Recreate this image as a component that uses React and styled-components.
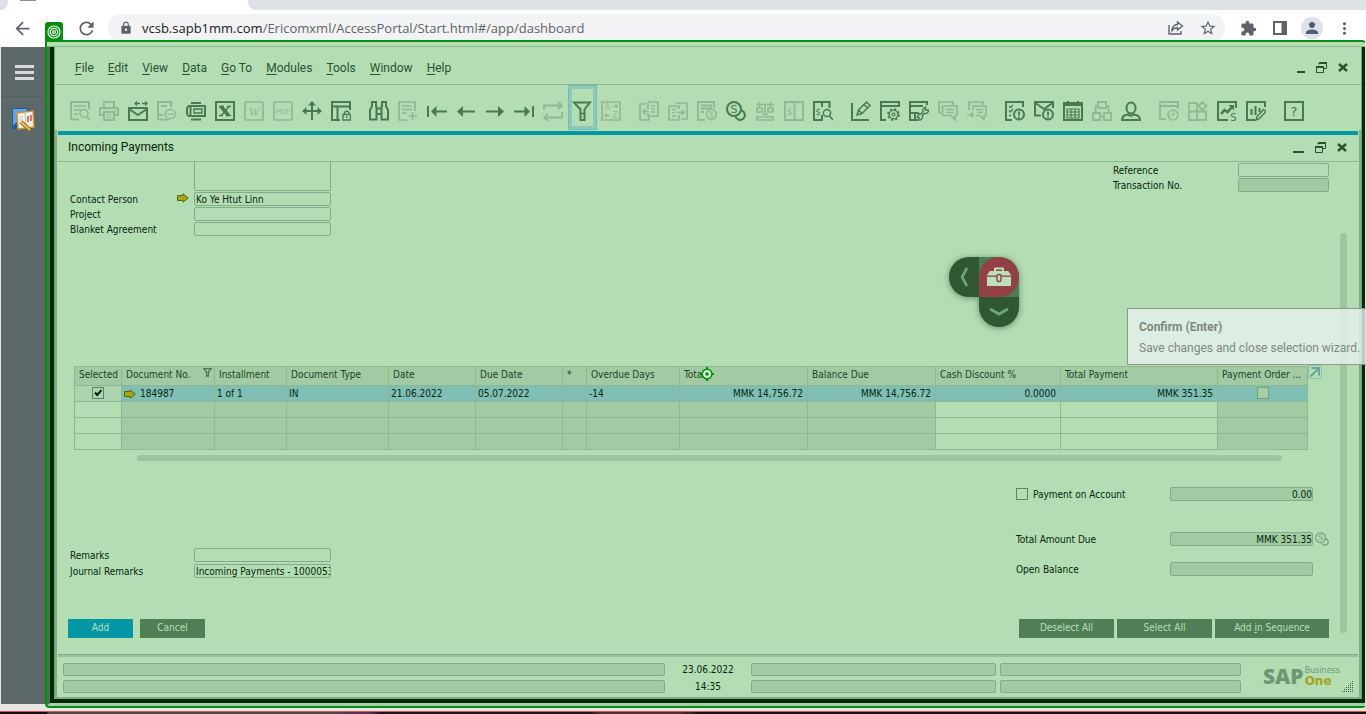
import React from 'react';
import styled, { createGlobalStyle, css } from 'styled-components';
import {
  MdArrowBack,
  MdRefresh,
  MdLock,
  MdStarBorder,
  MdExtension,
  MdPerson,
  MdMoreVert,
} from 'react-icons/md';

const c = {
  bg: '#b4ddb4',
  shade: '#a2cba3',
  line: '#8fb892',
  fieldLine: '#83ac88',
  edge: '#82aa86',
  dark: '#002b04',
  text: '#06260a',
  menu: '#285230',
  icon: '#4a7a50',
  faint: '#8fb992',
  teal: '#0397a6',
  row: '#80bfb4',
  button: '#527e55',
  record: '#078d12',
  thumb: '#9dc69f',
};
const small = "'DejaVu Sans Condensed', 'DejaVu Sans', sans-serif";
const ui = "Roboto, 'Open Sans', sans-serif";

const GlobalStyle = createGlobalStyle`
  *, *::before, *::after { box-sizing: border-box; }
  body { margin: 0; background: #fff; overflow: hidden; }
  button, input, textarea { font: inherit; color: inherit; margin: 0; }
  button { padding: 0; border: 0; background: none; }
  svg { display: block; flex: none; }
`;

const Page = styled.div`
  display: flex;
  flex-direction: column;
  min-height: 100vh;
  font: 10px/14px ${small};
  color: ${c.text};
`;

/* ---------- browser chrome ---------- */
const TabStrip = styled.div`
  display: flex;
  justify-content: space-between;
  flex: none;
  height: 10px;
  background: #fff;
`;
const TabEdge = styled.div`
  width: 8px;
  background: #dee1e6;
  border-radius: 0 0 8px 0;
`;
const Tab = styled.div`
  width: 240px;
  padding-left: 12px;
  &::before {
    content: '';
    display: block;
    width: 16px;
    height: 1px;
    background: #8c8c8c;
  }
`;
const TabRest = styled.div`
  flex: 1;
  background: #dee1e6;
  border-radius: 0 0 0 8px;
`;
const BrowserBar = styled.div`
  display: flex;
  align-items: flex-start;
  flex: none;
  height: 30px;
  padding: 4px 12px 0 12px;
  overflow: hidden;
  color: #5f6368;
`;
const ChromeButton = styled.button`
  display: flex;
  align-items: center;
  justify-content: center;
  flex: none;
  width: ${(p) => p.$w || 20}px;
  height: 28px;
  margin-left: ${(p) => p.$gap || 0}px;
`;
const Address = styled.div`
  display: flex;
  align-items: center;
  flex: 1;
  height: 28px;
  margin-left: 12px;
  padding: 0 8px 0 11px;
  border-radius: 14px;
  background: #f1f3f4;
`;
const Url = styled.div`
  flex: 1;
  margin-left: 9px;
  font: 13px/20px 'Open Sans', sans-serif;
  white-space: nowrap;
  b { font-weight: 400; color: #202124; }
`;
const Avatar = styled.span`
  display: flex;
  align-items: center;
  justify-content: center;
  width: 22px;
  height: 22px;
  border-radius: 50%;
  background: #dee1e6;
  color: #4d5b76;
`;

/* ---------- workspace ---------- */
const Workspace = styled.div`
  display: flex;
  flex: 1;
`;
const SideColumn = styled.div`
  display: flex;
  flex: none;
  width: 45px;
  padding: 7px 0 4px 1px;
  background: linear-gradient(#fff 7px, #e6e6e6 7px);
`;
const Sidebar = styled.nav`
  flex: 1;
  background: #5c686a;
`;
const SideItem = styled.button`
  display: flex;
  align-items: center;
  justify-content: center;
  width: 100%;
  height: ${(p) => p.$h}px;
  padding-top: ${(p) => (p.$ruled ? 2 : 0)}px;
  border-bottom: ${(p) => (p.$ruled ? '1px solid #556062' : '0')};
`;
const Burger = styled.span`
  width: 19px;
  height: 15px;
  margin-left: 3px;
  border-top: 3px solid #d6dadb;
  border-bottom: 3px solid #d6dadb;
  &::before {
    content: '';
    display: block;
    height: 3px;
    margin-top: 3px;
    background: #d6dadb;
  }
`;
const Frame = styled.div`
  position: relative;
  display: flex;
  flex-direction: column;
  flex: 1;
  min-width: 0;
  border: 2px solid ${c.record};
  border-right: 1px solid #d7ead8;
  border-radius: 0 4px 4px 4px;
  background: ${c.bg};
`;
const RecordBadge = styled.div`
  position: absolute;
  left: -2px;
  top: -20px;
  display: flex;
  align-items: center;
  justify-content: center;
  width: 18px;
  height: 19px;
  border-radius: 3px 3px 0 0;
  background: ${c.record};
`;
const Strip = styled.div`
  flex: none;
  height: 5px;
  border-bottom: 1px solid ${c.line};
`;
const Shell = styled.div`
  display: flex;
  flex: 1;
  border-left: 3px solid #45744b;
  border-bottom: 3px solid #a9cfa9;
`;
const Desk = styled.div`
  display: flex;
  flex: 1;
  min-width: 0;
  border: solid ${c.dark};
  border-width: 0 3px 4px 4px;
`;
const AppWindow = styled.div`
  display: flex;
  flex-direction: column;
  flex: 1;
  min-width: 0;
  border: solid #7aa280;
  border-width: 0 1px;
`;

/* ---------- menu and tool bars ---------- */
const MenuBar = styled.div`
  display: flex;
  justify-content: space-between;
  align-items: center;
  height: 38px;
  padding: 4px 13px 0 20px;
  border-bottom: 1px solid ${c.line};
`;
const Menus = styled.nav`
  display: flex;
  gap: 14px;
`;
const MenuButton = styled.button`
  font: 12px/18px ${ui};
  color: ${c.menu};
  white-space: nowrap;
  u { text-underline-offset: 2px; }
`;
const WindowControls = styled.div`
  display: flex;
  align-items: center;
  gap: ${(p) => p.$gap}px;
  color: ${c.menu};
`;
const ToolBar = styled.div`
  display: flex;
  gap: 9px;
  height: 45px;
  padding-left: 11px;
`;
const ToolGroup = styled.div`
  display: flex;
`;
const ToolButton = styled.button`
  width: 29px;
  height: 45px;
  padding: 16px 5px 9px 4px;
  color: ${(p) => (p.$on ? c.icon : c.faint)};
  ${(p) =>
    p.$active &&
    css`
      box-shadow: inset 0 0 0 1px #70bdb6, inset 0 0 0 4px #90c8b8;
    `}
`;

/* ---------- child window ---------- */
const Child = styled.section`
  display: flex;
  flex-direction: column;
  flex: 1;
  padding: 1px 1px 0;
  border: solid ${c.edge};
  border-width: 0 2px 2px;
`;
const TitleBar = styled.header`
  display: flex;
  align-items: center;
  justify-content: space-between;
  flex: none;
  height: 31px;
  padding: 0 11px 2px 10px;
  border-top: 4px solid ${c.teal};
  border-bottom: 1px solid ${c.line};
`;
const Title = styled.h1`
  margin: 0;
  font: 12px/18px ${ui};
`;
const Form = styled.form`
  display: flex;
  flex: 1;
`;
const FormBody = styled.div`
  display: flex;
  flex-direction: column;
  flex: 1;
  min-width: 0;
`;
const VerticalThumb = styled.div`
  flex: none;
  width: 7px;
  margin: 71px 11px 21px;
  border-radius: 4px;
  background: ${c.thumb};
`;
const HeaderPart = styled.div`
  display: flex;
  justify-content: space-between;
  flex: 1 0 204px;
  padding-left: 12px;
`;
const Fields = styled.div`
  display: flex;
  flex-direction: column;
  gap: ${(p) => p.$gap || 1}px;
  padding-top: ${(p) => p.$top || 0}px;
`;
const FieldRow = styled.div`
  display: flex;
  height: 14px;
  margin-top: ${(p) => p.$space || 0}px;
`;
const Label = styled.label`
  display: flex;
  align-items: flex-start;
  justify-content: space-between;
  flex: none;
  width: ${(p) => p.$w}px;
  padding: 1px 5px 0 0;
  white-space: nowrap;
`;
const Field = styled.input`
  flex: none;
  width: ${(p) => p.$w}px;
  height: 14px;
  padding: 1px 0 0 ${(p) => (p.$right ? 0 : 1)}px;
  border: 1px solid ${c.fieldLine};
  border-radius: 2px;
  outline: 0;
  background: ${(p) => (p.readOnly ? c.shade : 'transparent')};
  text-align: ${(p) => (p.$right ? 'right' : 'left')};
`;
const PayTo = styled.textarea`
  display: block;
  width: 137px;
  height: 29px;
  margin-left: 124px;
  border: solid ${c.fieldLine};
  border-width: 0 1px 1px;
  border-radius: 0 0 2px 2px;
  background: transparent;
  resize: none;
`;
const TablePart = styled.div`
  display: flex;
  align-items: flex-start;
  padding-left: 16px;
`;
const Table = styled.table`
  flex: 1;
  width: 0;
  table-layout: fixed;
  border-collapse: separate;
  border-spacing: 0;
  border: solid ${c.line};
  border-width: 1px 0 0 1px;
`;
const Th = styled.th`
  height: 19px;
  padding: 0 2px 2px 4px;
  border: solid ${c.line};
  border-width: 0 1px 1px 0;
  background: ${c.shade};
  color: #1d4424;
  font-weight: 400;
  line-height: 14px;
  text-align: left;
  white-space: nowrap;
  overflow: hidden;
`;
const HeadCell = styled.span`
  display: flex;
  justify-content: space-between;
  align-items: flex-start;
`;
const Td = styled.td`
  height: 16px;
  padding: 0 ${(p) => (p.$right ? 4 : 2)}px;
  border: solid ${c.line};
  border-width: 0 1px 1px 0;
  background: ${(p) => p.$bg};
  line-height: 14px;
  white-space: nowrap;
  overflow: hidden;
  text-align: ${(p) => (p.$right ? 'right' : p.$center ? 'center' : 'left')};
`;
const Linked = styled.span`
  display: flex;
  align-items: center;
  gap: 4px;
`;
const Check = styled.input`
  appearance: none;
  display: ${(p) => (p.$inline ? 'block' : 'inline-block')};
  flex: none;
  width: 12px;
  height: 12px;
  border: 1px solid ${(p) => (p.disabled ? '#7c9f75' : '#5a875f')};
  vertical-align: top;
  margin: ${(p) => (p.$inline ? 1 : 0)}px 0 0;
  background: ${(p) => (p.disabled ? '#a4cda8' : 'transparent')};
  &:checked {
    background: url("data:image/svg+xml,%3Csvg xmlns='http://www.w3.org/2000/svg' viewBox='0 0 10 10'%3E%3Cpath d='M2 4.5 4.2 7 8.5 2.2' fill='none' stroke='%23001c04' stroke-width='2'/%3E%3C/svg%3E");
  }
`;
const PopOut = styled.button`
  flex: none;
  width: 14px;
  height: 14px;
  margin: -1px 7px 0 0;
  border: 1px solid #8fc4b4;
  color: #66a59a;
`;
const HorizontalThumb = styled.div`
  flex: none;
  height: 6px;
  margin: 5px 47px 0 79px;
  border-radius: 3px;
  background: ${c.thumb};
`;
const LowerPart = styled.div`
  display: flex;
  justify-content: space-between;
  flex: none;
  height: 158px;
  padding-left: 12px;
`;
const Ticked = styled.label`
  display: flex;
  gap: 5px;
  width: 154px;
  white-space: nowrap;
  span { padding-top: 1px; }
`;
const Tail = styled.span`
  width: 16px;
  padding-left: 2px;
  color: #6f9f76;
`;
const ButtonRow = styled.div`
  display: flex;
  justify-content: space-between;
  padding: 0 0 16px 10px;
`;
const Buttons = styled.div`
  display: flex;
  gap: ${(p) => p.$gap}px;
`;
const Button = styled.button`
  width: ${(p) => p.$w}px;
  height: 19px;
  padding-bottom: 1px;
  background: ${(p) => (p.$primary ? c.teal : c.button)};
  color: #b4e0b6;
`;
const StatusBar = styled.footer`
  display: grid;
  grid-template-columns: 602fr 78px 245fr 241fr 109px;
  grid-template-rows: 13px 13px;
  gap: 4px;
  flex: none;
  padding: 8px 4px 4px 5px;
  border-top: 1px solid ${c.fieldLine};
  box-shadow: inset 0 2px 0 #9ac39c;
`;
const StatusField = styled.input`
  min-width: 0;
  width: 100%;
  height: 13px;
  padding: 0 2px;
  border: 1px solid ${c.fieldLine};
  border-radius: 2px;
  background: ${c.shade};
`;
const StatusText = styled.div`
  text-align: center;
  line-height: 13px;
`;
const Logo = styled.div`
  display: flex;
  grid-column: 5;
  grid-row: 1 / 3;
  padding-left: 18px;
  color: #6f9872;
`;
const LogoMark = styled.strong`
  font: 800 21px/26px 'Open Sans', sans-serif;
`;
const LogoWords = styled.span`
  display: flex;
  flex-direction: column;
  padding: 4px 0 0 1px;
  font: 8px/8px 'DejaVu Sans', sans-serif;
  strong { font: 700 12px/12px 'DejaVu Sans', sans-serif; color: #a8a022; }
`;
const Grip = styled.svg`
  align-self: flex-end;
  margin-left: auto;
`;

/* ---------- things lying over the form ---------- */
const ToolboxWidget = styled.div`
  position: absolute;
  left: 902px;
  top: 215px;
  display: grid;
  grid-template-columns: 30px 40px;
  grid-template-rows: 40px 30px;
  filter: drop-shadow(0 1px 3px rgba(20, 60, 20, 0.5));
`;
const WidgetButton = styled.button`
  display: flex;
  align-items: center;
  justify-content: center;
  grid-column: ${(p) => p.$col};
  grid-row: ${(p) => p.$row};
  background: #305830;
  border-radius: ${(p) => p.$radius};
  color: #72a377;
`;
const WidgetCore = styled.div`
  display: flex;
  background: #4f7c52;
  border-radius: 0 20px 0 0;
  button { flex: 1; background: #914043; color: #bce0b8; }
`;
const Tooltip = styled.div`
  position: absolute;
  right: -1px;
  top: 266px;
  width: 239px;
  height: 57px;
  padding: 8px 11px;
  border: 1px solid #8b9a8c;
  border-right: 0;
  background: rgba(233, 241, 240, 0.8);
  color: #7c897e;
  font: 12px/21px ${ui};
  white-space: nowrap;
  strong { display: block; font-weight: 700; }
`;
const Marker = styled.svg`
  position: absolute;
  left: 653px;
  top: 325px;
`;
const BottomEdge = styled.div`
  flex: none;
  height: 6px;
  border-top: 3px solid #e6e6e6;
  background: linear-gradient(#d9534f 1px, transparent 1px),
    linear-gradient(90deg, #111 47px, #4b4a47 48px 340px, #55305a 350px 370px, #151a22 380px 590px, #503033 600px 680px, #10151d 700px);
`;

/* ---------- drawings ---------- */
const Svg = ({ size = 20, w, h, box, sw = 2, children, ...rest }) => (
  <svg
    width={w || size}
    height={h || size}
    viewBox={box || `0 0 ${w || size} ${h || size}`}
    fill="none"
    stroke="currentColor"
    strokeWidth={sw}
    aria-hidden="true"
    {...rest}
  >
    {children}
  </svg>
);
const Glyph = ({ x, y, size, children, serif, italic }) => (
  <text
    x={x}
    y={y}
    fontSize={size}
    textAnchor="middle"
    fill="currentColor"
    stroke="none"
    fontStyle={italic ? 'italic' : 'normal'}
    fontFamily={serif ? "'Liberation Serif', serif" : "'DejaVu Sans', sans-serif"}
  >
    {children}
  </text>
);

const art = {
  preview: (
    <>
      <path d="M9 18.5H3Q1 18.5 1 17V1h18v7" />
      <path d="M4 5h12M4 9h8M4 13h4" strokeWidth="1.4" />
      <circle cx="14" cy="12.5" r="4" strokeWidth="1.4" />
      <path d="m16.500 15.500 3 3.500" strokeWidth="1.6" />
    </>
  ),
  print: (
    <>
      <path d="M5 6V1h10v5M5 14H1V7h18v7h-4" />
      <path d="M5 11h10v8H5z" />
      <path d="M7 13.500h5M7 16h5M15 9.500h2" strokeWidth="1" />
    </>
  ),
  mail: (
    <>
      <path d="M1 7h18v12H1z" />
      <path d="m2 8.500 8 5.500 8-5.500" />
      <path d="M6.500 2.500H12M9 .5 7 2.500l2 2M19.500 2.500H14M17 .5l2 2-2 2" strokeWidth="1.3" />
    </>
  ),
  docChat: (
    <>
      <path d="M7 18.500H2Q1 18.500 1 17V1h13v5M4 5h6M1 14h5" />
      <path d="M13.500 8.500c7 0 7 9 0 9l-5 1.500 1-3c-3-3-1-7.500 4-7.500z" strokeWidth="1.4" />
      <path d="M10.500 13h1.500M13 13h1.500M15.500 13H17" strokeWidth="1.8" />
    </>
  ),
  fax: (
    <>
      <path d="M4.500 5h14.500v10H4.500zM4.500 5H2.500L1 7v6l1.500 2h2" />
      <path d="M5 2h10M5 18.500h10" />
      <path d="M8 8h8v4H8z" strokeWidth="1.4" />
    </>
  ),
  excel: (
    <>
      <path d="M1 1h18v18H1z" />
      <path d="m6 5.500 7.500 9" strokeWidth="3.6" />
      <path d="M14.500 5 6 15M4 5.500h5M11 14.500h5M12 5.500h4M4 14.500h4" strokeWidth="1.3" />
    </>
  ),
  word: (
    <>
      <rect x="1" y="1" width="18" height="18" rx="1" strokeWidth="1.7" />
      <Glyph x="10" y="14.500" size="13" serif italic>W</Glyph>
    </>
  ),
  pdf: (
    <>
      <rect x="1" y="1" width="18" height="18" rx="1" strokeWidth="1.7" />
      <Glyph x="10" y="12.500" size="7">PDF</Glyph>
    </>
  ),
  move: (
    <>
      <path d="M10 2v17M2 10h16" />
      <path d="M10 0 6 4.500h8zM0 10l4.500-4v8zM20 10l-4.500-4v8z" fill="currentColor" stroke="none" />
    </>
  ),
  layoutLock: (
    <>
      <path d="M9 19H1V1h18v8M1 5.500h18M6.500 5.500V19" />
      <path d="M12 13.500h7.500v5.500H12zM13.500 13.500v-2q2.200-2.500 4.500 0v2M15.700 15v2" strokeWidth="1.4" />
    </>
  ),
  binoculars: (
    <path d="M3 6V1h4v5M13 6V1h4v5M3 5 1 9v9.500h6.500V5M17 5l2 4v9.500h-6.500V5M7.500 7.500h5M7.500 13h5" />
  ),
  docPlus: (
    <>
      <path d="M9 19H1V1h16v9" strokeWidth="1.700" />
      <path d="M4 5h10M4 8.500h10M4 12h5M14.500 11v8M10.500 15h8.500" strokeWidth="1.600" />
    </>
  ),
  first: (
    <>
      <path d="M1 5v11M6 10.500h14" />
      <path d="m4 10.500 5.500-5.500v11z" fill="currentColor" stroke="none" />
    </>
  ),
  prev: (
    <>
      <path d="M3 10.500h16" />
      <path d="M1 10.500 7 5v11z" fill="currentColor" stroke="none" />
    </>
  ),
  next: (
    <>
      <path d="M1 10.500h16" />
      <path d="M19 10.500 13 5v11z" fill="currentColor" stroke="none" />
    </>
  ),
  last: (
    <>
      <path d="M19 5v11M0 10.500h14" />
      <path d="m16 10.500-5.500-5.500v11z" fill="currentColor" stroke="none" />
    </>
  ),
  loop: (
    <path d="M1 9V4.500h17M15 1l4 3.500L15 8M19 11v5.500H2M5 13l-4 3.500L5 20" strokeWidth="1.8" />
  ),
  filter: (
    <>
      <path d="M2 1.500h16L12.500 8.500V19h-4V8.500z" />
      <path d="M8.500 12.500h4" strokeWidth="1.5" />
    </>
  ),
  sort: (
    <>
      <path d="M1 1h18v18H1z" strokeWidth="1.7" />
      <Glyph x="6.500" y="9" size="8">A</Glyph>
      <Glyph x="14" y="17" size="8">Z</Glyph>
      <path d="M11.500 5h5M14.500 3l2 2-2 2M9 14.500H4M6 12.500l-2 2 2 2" strokeWidth="1.2" />
    </>
  ),
  copyFrom: (
    <>
      <path d="M7 3H1v16h9v-3M9 1h10v14H9v-3M9 8V1M12 5h4M12 8h4M12 11h4" strokeWidth="1.7" />
      <path d="M10 10.500H4M6.500 8 4 10.500 6.500 13" strokeWidth="1.7" />
    </>
  ),
  copyTo: (
    <>
      <path d="M8 2h11v16h-6M11 14v5H1V5h10v3M4 8.500h4M4 11.500h3M4 15h4" strokeWidth="1.7" />
      <path d="M9 11.500h7M13.500 9l2.500 2.500-2.500 2.500" strokeWidth="1.7" />
    </>
  ),
  docCoin: (
    <>
      <path d="M8 19H1V1h16v6M4 4.500h10v3H4M4 11h3" strokeWidth="1.8" />
      <circle cx="14.5" cy="13.5" r="5" strokeWidth="1.5" />
      <Glyph x="14.500" y="17" size="9">$</Glyph>
    </>
  ),
  coins: (
    <>
      <circle cx="8" cy="8" r="7" />
      <path d="M15.500 9.500a4.800 4.800 0 1 1-6 6" />
      <Glyph x="8" y="12" size="11">S</Glyph>
    </>
  ),
  scales: (
    <>
      <path d="M1 3.500h18M10 3.500V14M2 11h5V7H2zM13 11h5V7h-5zM4.500 1v6M15.500 1v6" strokeWidth="1.700" />
      <path d="M2 16h16v3H2zM7 13.500h6" strokeWidth="1.700" />
    </>
  ),
  ledger: (
    <>
      <path d="M1 1h18v18H1zM10.500 1v18" strokeWidth="1.8" />
      <Glyph x="5.700" y="13.500" size="9">$</Glyph>
    </>
  ),
  ledgerSearch: (
    <>
      <path d="M10 19H1V1h15.500v6M9 1v5M9 14v5" />
      <Glyph x="5" y="13.500" size="9">$</Glyph>
      <circle cx="14" cy="12" r="3.6" strokeWidth="1.5" />
      <path d="m16.500 15 3.500 4" strokeWidth="1.6" />
    </>
  ),
  edit: (
    <>
      <path d="M1 2v17h17" />
      <path d="m6 14 1.500-5 8-8 3.500 3.500-8 8zM13 3.500l3.500 3.500M7.500 9l3.500 3.500" strokeWidth="1.5" />
    </>
  ),
  windowGear: (
    <>
      <path d="M6 19H1V1h18v5M1 5h18" />
      <circle cx="13.5" cy="13.5" r="5.5" strokeDasharray="2.2 2.12" strokeWidth="1.6" />
      <circle cx="13.5" cy="13.5" r="4.3" strokeWidth="1.3" />
      <circle cx="13.5" cy="13.5" r="1.5" strokeWidth="1.1" />
    </>
  ),
  formWrench: (
    <>
      <path d="M9 19H1V1h17v3M1 5h13M1 12h9M6 12v7" />
      <path d="M16.500 6v3h3v1.500l-2 2h-2.500l-1.500 2V17l-2 2h-1.500v-2.500H8.500V15l2-2H12l2-2.500V8z" strokeWidth="1.4" />
    </>
  ),
  chat: (
    <>
      <path d="M3 12H1V1h14v3" strokeWidth="1.7" />
      <path d="M4.500 5H19v9.500h-2V19l-4-4.500H4.500zM8 8.500h8M8 11.500h8" strokeWidth="1.7" />
    </>
  ),
  chatSend: (
    <>
      <path d="M2 9V1h14v3" strokeWidth="1.7" />
      <path d="M6 9V5h13v9.500h-2V19l-4-4.500H9M9 8.500h7M10 11.500h6M0 14h6M4 11.500 6.500 14 4 16.500" strokeWidth="1.6" />
    </>
  ),
  taskAlert: (
    <>
      <path d="M7 19H1V1h17v5" />
      <path d="m4 5 1.500 1.500L8 4M4 9.500 5.500 11 8 8M4 14.500h2" strokeWidth="1.3" />
      <circle cx="14" cy="13.5" r="5" />
      <path d="M14 10.500v4M14 15.500v1.500" strokeWidth="1.8" />
    </>
  ),
  mailAlert: (
    <>
      <path d="M7 14.500H1V1h18v6M1.500 2l8.500 6 8.500-6" />
      <circle cx="14" cy="13.5" r="5" />
      <path d="M14 10.500v4M14 15.500v1.500" strokeWidth="1.8" />
    </>
  ),
  calendar: (
    <>
      <path d="M1 2h18v17H1z" />
      <path d="M1 3.500h18" strokeWidth="3" />
      <path d="M5 0v4M15 0v4" />
      <path d="M4 8h12v9H4zM8 8v9M12 8v9M4 11h12M4 14h12" strokeWidth="1.2" />
    </>
  ),
  boxes: (
    <path d="M6 1h8v6H6zM1 12h7v7H1zM12 12h7v7h-7zM8 15.500h4M3.500 12V5H6M16.500 12V5H14" strokeWidth="1.8" />
  ),
  person: (
    <>
      <ellipse cx="10" cy="7" rx="4.5" ry="5.5" />
      <path d="M7 13.500c-4 .5-6 2-6 5.500h18c0-3.500-2-5-6-5.500-1.500 1.500-4.500 1.500-6 0z" />
    </>
  ),
  windowGauge: (
    <>
      <path d="M7 18H1V1h18v7M1 5h18" strokeWidth="1.8" />
      <circle cx="14" cy="14" r="5" strokeWidth="1.6" />
      <path d="m13 15 3-3M10.500 14h1.500M14 10.500v1" strokeWidth="1.4" />
    </>
  ),
  widgets: (
    <path d="M1 2h8v17H1zM1 10.500h17V19H9M14.500 1l4 4-4 4-4-4z" strokeWidth="1.8" />
  ),
  trend: (
    <>
      <path d="M11 19H1V1h18v6" />
      <path d="m4 13 3.500-4 3 2 5-5.500" strokeWidth="2.6" />
      <path d="M11.500 4H17v5.500z" fill="currentColor" stroke="none" />
      <Glyph x="16.500" y="19.500" size="10">S</Glyph>
    </>
  ),
  chartEdit: (
    <>
      <path d="M9 19H1V1h18v5" />
      <path d="M5.500 8v6M9.500 5v9M13.500 7v4" />
      <path d="m10 19 1-3.500 6.500-7L20 10.500l-6.500 7z" strokeWidth="1.4" />
    </>
  ),
  help: (
    <>
      <path d="M1 1h18v18H1z" />
      <Glyph x="10" y="14.500" size="13">?</Glyph>
    </>
  ),
};

const toolGroups = [
  ['preview', 'print', '*mail', 'docChat', '*fax', '*excel', 'word', 'pdf', '*move', '*layoutLock'],
  ['*binoculars', 'docPlus', '*first', '*prev', '*next', '*last', 'loop', '*filter', 'sort'],
  ['copyFrom', 'copyTo', 'docCoin', '*coins', 'scales', 'ledger', '*ledgerSearch'],
  ['*edit', '*windowGear', '*formWrench', 'chat', 'chatSend'],
  ['*taskAlert', '*mailAlert', '*calendar', 'boxes', '*person'],
  ['windowGauge', 'widgets', '*trend', '*chartEdit'],
  ['*help'],
];
const menus = ['File', 'Edit', 'View', 'Data', 'Go To', 'Modules', 'Tools', 'Window', 'Help'];

const LinkArrow = () => (
  <svg width="12" height="10" viewBox="0 0 12 10" aria-hidden="true">
    <path d="M.5 2.500H6V.8L11.300 5 6 9.200V7.500H.5z" fill="#aea50c" stroke="#4d6a1c" />
  </svg>
);

const Controls = ({ gap, size }) => (
  <WindowControls $gap={gap}>
    <button type="button" aria-label="Minimize">
      <Svg w={size} h={11}><path d={`M0 10h${size}`} /></Svg>
    </button>
    <button type="button" aria-label="Restore">
      <Svg w={11} h={11} sw={1}>
        <path d="M3 2.500V1h7.500v5.500H8M.5 4.500h7v6h-7z" />
        <path d="M3 1h8M0 5h8" strokeWidth="2" />
      </Svg>
    </button>
    <button type="button" aria-label="Close">
      <Svg w={10} h={11} sw={2.4}><path d="m1 2 8 7M9 2 1 9" /></Svg>
    </button>
  </WindowControls>
);

const columns = [
  { w: 47, title: 'Selected', light: true },
  { w: 93, title: 'Document No.' },
  { w: 72, title: 'Installment', value: '1 of 1' },
  { w: 102, title: 'Document Type', value: 'IN' },
  { w: 87, title: 'Date', value: '21.06.2022' },
  { w: 87, title: 'Due Date', value: '05.07.2022' },
  { w: 24, title: '*' },
  { w: 93, title: 'Overdue Days', value: '-14' },
  { w: 128, title: 'Total', value: 'MMK 14,756.72', right: true },
  { w: 128, title: 'Balance Due', value: 'MMK 14,756.72', right: true },
  { w: 125, title: 'Cash Discount %', value: '0.0000', right: true, light: true },
  { w: 157, title: 'Total Payment', value: 'MMK 351.35', right: true, light: true },
  { w: 90, title: 'Payment Order ...' },
];

function PaymentTable() {
  return (
    <Table>
      <colgroup>
        {columns.map((col) => (
          <col key={col.title} width={col.w} />
        ))}
      </colgroup>
      <thead>
        <tr>
          {columns.map((col, i) => (
            <Th key={col.title} scope="col">
              {i === 1 ? (
                <HeadCell>
                  {col.title}
                  <Svg w={9} h={9} sw={1.3} color={c.icon}>
                    <path d="M.8.700h7.400L5.400 4v4H3.600V4z" />
                  </Svg>
                </HeadCell>
              ) : (
                col.title
              )}
            </Th>
          ))}
        </tr>
      </thead>
      <tbody>
        <tr>
          {columns.map((col, i) => (
            <Td
              key={col.title}
              $bg={i === 0 ? '#abd5ae' : c.row}
              $right={col.right}
              $center={i === 0 || i === 12}
            >
              {i === 0 && <Check type="checkbox" aria-label="Selected" defaultChecked />}
              {i === 1 && (
                <Linked>
                  <LinkArrow />
                  184987
                </Linked>
              )}
              {i === 12 && <Check type="checkbox" aria-label="Payment order" disabled />}
              {col.value}
            </Td>
          ))}
        </tr>
        {[1, 2, 3].map((row) => (
          <tr key={row}>
            {columns.map((col) => (
              <Td key={col.title} $bg={col.light ? c.bg : c.shade} />
            ))}
          </tr>
        ))}
      </tbody>
    </Table>
  );
}

export default function App() {
  return (
    <Page>
      <GlobalStyle />
      <TabStrip>
        <TabEdge />
        <Tab />
        <TabRest />
      </TabStrip>
      <BrowserBar>
        <ChromeButton aria-label="Back"><MdArrowBack size={21} /></ChromeButton>
        <ChromeButton aria-label="Reload" $gap={44}><MdRefresh size={21} /></ChromeButton>
        <Address>
          <MdLock size={14} />
          <Url><b>vcsb.sapb1mm.com</b>/Ericomxml/AccessPortal/Start.html#/app/dashboard</Url>
          <ChromeButton aria-label="Share" $w={16}>
            <Svg w={16} h={14} sw={1.4}>
              <path d="M1 4v9h12v-3M9.500 1l5 4-5 4V6.800c-2.500 0-4 .700-5.500 2.700.300-3.500 2-5.700 5.500-6z" />
            </Svg>
          </ChromeButton>
          <ChromeButton aria-label="Bookmark" $w={18} $gap={15}><MdStarBorder size={18} /></ChromeButton>
        </Address>
        <ChromeButton aria-label="Extensions" $w={18} $gap={14}><MdExtension size={17} /></ChromeButton>
        <ChromeButton aria-label="Side panel" $w={14} $gap={16}>
          <Svg size={14}>
            <path d="M1 1h12v12H1z" />
            <path d="M11 1v12" strokeWidth="5" />
          </Svg>
        </ChromeButton>
        <ChromeButton aria-label="Profile" $w={22} $gap={14}><Avatar><MdPerson size={18} /></Avatar></ChromeButton>
        <ChromeButton aria-label="Menu" $gap={11}><MdMoreVert size={19} /></ChromeButton>
      </BrowserBar>

      <Workspace>
        <SideColumn>
          <Sidebar>
            <SideItem aria-label="Open menu" $h={50} $ruled><Burger /></SideItem>
            <SideItem aria-label="SAP Business One" $h={44}>
              <svg width="24" height="27" viewBox="0 0 24 27">
                <path d="M1 2h17v4L7 23H1z" fill="#205c9c" />
                <path d="M2 3h15L2 20z" fill="#6aa3d5" />
                <path d="m6 7 16-2 1 16-16 2z" fill="#f7f3ea" stroke="#c9963d" strokeWidth="1.5" />
                <path d="m14 6 1 16M8 11h4M8 14h4M8 17h4" stroke="#bbb" />
                <path d="M17 10v6M20 9v6" stroke="#d04a3a" strokeWidth="1.5" />
                <path d="m10 16 9 8" stroke="#8a6a1d" strokeWidth="4" />
                <path d="m10 16 9 8" stroke="#f0c453" strokeWidth="2" />
              </svg>
            </SideItem>
          </Sidebar>
        </SideColumn>

        <Frame>
          <RecordBadge>
            <Svg size={14} sw={1.2} color="#e6f6e6">
              <circle cx="7" cy="7" r="6" />
              <circle cx="7" cy="7" r="3.7" />
              <circle cx="7" cy="7" r="1.4" />
            </Svg>
          </RecordBadge>
          <Strip />
          <Shell>
            <Desk>
              <AppWindow>
                <MenuBar>
                  <Menus>
                    {menus.map((m) => (
                      <MenuButton key={m} type="button"><u>{m[0]}</u>{m.slice(1)}</MenuButton>
                    ))}
                  </Menus>
                  <Controls gap={11} size={8} />
                </MenuBar>
                <ToolBar>
                  {toolGroups.map((group) => (
                    <ToolGroup key={group[0]}>
                      {group.map((entry) => {
                        const on = entry[0] === '*';
                        const name = on ? entry.slice(1) : entry;
                        return (
                          <ToolButton key={name} type="button" aria-label={name} $on={on} $active={name === 'filter'}>
                            <Svg>{art[name]}</Svg>
                          </ToolButton>
                        );
                      })}
                    </ToolGroup>
                  ))}
                </ToolBar>

                <Child>
                  <TitleBar>
                    <Title>Incoming Payments</Title>
                    <Controls gap={11} size={11} />
                  </TitleBar>
                  <Form onSubmit={(e) => e.preventDefault()}>
                    <FormBody>
                      <HeaderPart>
                        <Fields>
                          <PayTo aria-label="Pay to" />
                          <FieldRow>
                            <Label htmlFor="contact" $w={124}>Contact Person<LinkArrow /></Label>
                            <Field id="contact" $w={137} defaultValue="Ko Ye Htut Linn" />
                          </FieldRow>
                          <FieldRow>
                            <Label htmlFor="project" $w={124}>Project</Label>
                            <Field id="project" $w={137} />
                          </FieldRow>
                          <FieldRow>
                            <Label htmlFor="blanket" $w={124}>Blanket Agreement</Label>
                            <Field id="blanket" $w={137} />
                          </FieldRow>
                        </Fields>
                        <Fields $top={1}>
                          <FieldRow>
                            <Label htmlFor="reference" $w={125}>Reference</Label>
                            <Field id="reference" $w={91} />
                          </FieldRow>
                          <FieldRow>
                            <Label htmlFor="transaction" $w={125}>Transaction No.</Label>
                            <Field id="transaction" $w={91} readOnly />
                          </FieldRow>
                        </Fields>
                      </HeaderPart>

                      <TablePart>
                        <PaymentTable />
                        <PopOut type="button" aria-label="Expand table">
                          <Svg size={12} sw={2}><path d="m1.500 10.500 8-8M2.500 2h7.500v7.500" /></Svg>
                        </PopOut>
                      </TablePart>
                      <HorizontalThumb />

                      <LowerPart>
                        <Fields $gap={2} $top={87}>
                          <FieldRow>
                            <Label htmlFor="remarks" $w={124}>Remarks</Label>
                            <Field id="remarks" $w={137} />
                          </FieldRow>
                          <FieldRow>
                            <Label htmlFor="journal" $w={124}>Journal Remarks</Label>
                            <Field id="journal" $w={137} defaultValue="Incoming Payments - 1000053" />
                          </FieldRow>
                        </Fields>
                        <Fields $gap={16} $top={26}>
                          <FieldRow>
                            <Ticked>
                              <Check type="checkbox" $inline />
                              <span>Payment on Account</span>
                            </Ticked>
                            <Field aria-label="Payment on account amount" $w={143} $right readOnly value="0.00" />
                            <Tail />
                          </FieldRow>
                          <FieldRow $space={15}>
                            <Label htmlFor="due" $w={154}>Total Amount Due</Label>
                            <Field id="due" $w={143} $right readOnly value="MMK 351.35" />
                            <Tail><Svg size={14} box="0 0 20 20" sw={1.6}>{art.coins.props.children}</Svg></Tail>
                          </FieldRow>
                          <FieldRow>
                            <Label htmlFor="open" $w={154}>Open Balance</Label>
                            <Field id="open" $w={143} readOnly />
                            <Tail />
                          </FieldRow>
                        </Fields>
                      </LowerPart>

                      <ButtonRow>
                        <Buttons $gap={7}>
                          <Button type="submit" $w={65} $primary>Add</Button>
                          <Button type="button" $w={65}>Cancel</Button>
                        </Buttons>
                        <Buttons $gap={3}>
                          <Button type="button" $w={95}>Deselect All</Button>
                          <Button type="button" $w={95}>Select All</Button>
                          <Button type="button" $w={114}>Add <u>i</u>n Sequence</Button>
                        </Buttons>
                      </ButtonRow>
                    </FormBody>
                    <VerticalThumb />
                  </Form>

                  <StatusBar>
                    <StatusField readOnly aria-label="Message" />
                    <StatusText>23.06.2022</StatusText>
                    <StatusField readOnly aria-label="Status 1" />
                    <StatusField readOnly aria-label="Status 2" />
                    <Logo>
                      <LogoMark>SAP</LogoMark>
                      <LogoWords>Business<strong>One</strong></LogoWords>
                      <Grip width="12" height="12" viewBox="0 0 12 12" aria-hidden="true">
                        {[0, 1, 2, 3, 4, 5].map((r) =>
                          [0, 1, 2, 3, 4, 5]
                            .filter((k) => k + r >= 5)
                            .map((k) => (
                              <rect key={`${r}${k}`} x={k * 2} y={r * 2} width="1" height="1" fill="#3c6240" />
                            )),
                        )}
                      </Grip>
                    </Logo>
                    <StatusField readOnly aria-label="Message detail" />
                    <StatusText>14:35</StatusText>
                    <StatusField readOnly aria-label="Status 3" />
                    <StatusField readOnly aria-label="Status 4" />
                  </StatusBar>
                </Child>
              </AppWindow>
            </Desk>
          </Shell>

          <ToolboxWidget>
            <WidgetButton type="button" aria-label="Collapse" $col={1} $row={1} $radius="20px 0 0 20px">
              <Svg w={10} h={20} sw={2.6}><path d="M8 1 3 10l5 9" /></Svg>
            </WidgetButton>
            <WidgetCore>
              <WidgetButton type="button" aria-label="Toolbox" $radius="20px 20px 20px 0">
                <svg width="26" height="20" viewBox="0 0 26 20" fill="currentColor">
                  <path d="M8 4V1.500Q8 .5 9 .5h8q1 0 1 1V4h4l3.500 4.500H.5L4 4zM10 4h6V2.500h-6z" fillRule="evenodd" />
                  <path d="M1 9.800h24V19H1z" />
                  <rect x="11" y="7.5" width="4" height="7" rx="1.5" stroke="#914043" strokeWidth="1.4" />
                </svg>
              </WidgetButton>
            </WidgetCore>
            <WidgetButton type="button" aria-label="Expand" $col={2} $row={2} $radius="0 0 20px 20px">
              <Svg w={20} h={10} sw={3}><path d="m1 2 9 5 9-5" /></Svg>
            </WidgetButton>
          </ToolboxWidget>

          <Marker width="14" height="14" viewBox="0 0 14 14" aria-hidden="true">
            <path d="M7 0v14M0 7h14" stroke={c.record} strokeWidth="2" />
            <circle cx="7" cy="7" r="4.8" fill="#d8f0d8" stroke={c.record} strokeWidth="1.6" />
            <circle cx="7" cy="7" r="1.8" fill={c.record} />
          </Marker>

          <Tooltip role="tooltip">
            <strong>Confirm (Enter)</strong>
            Save changes and close selection wizard.
          </Tooltip>
        </Frame>
      </Workspace>
      <BottomEdge />
    </Page>
  );
}
